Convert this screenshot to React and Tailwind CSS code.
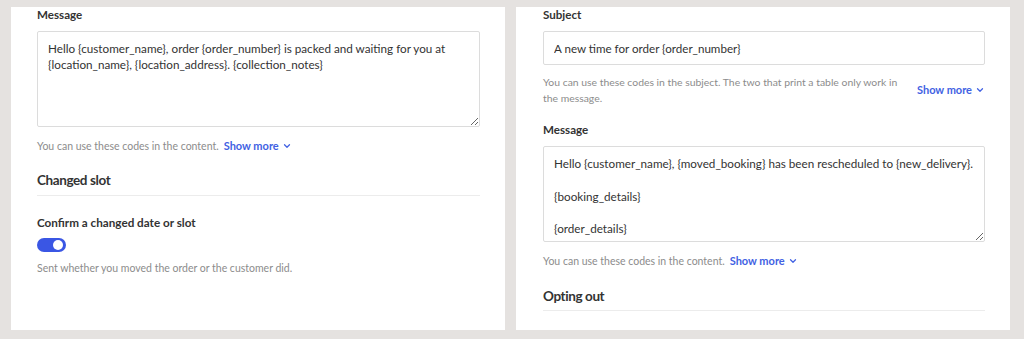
import React from 'react';
import { ChevronDown } from 'lucide-react';

const font = { fontFamily: 'Lato, "Noto Sans", Arial, sans-serif' };

const ShowMore = () => (
  <button type="button" className="inline-flex shrink-0 items-center gap-[3px] whitespace-nowrap text-[11px] font-bold text-[#4262e3]">
    Show more
    <ChevronDown size={10} strokeWidth={3} />
  </button>
);

const MessageBox = ({ value }) => (
  <textarea
    defaultValue={value}
    className="mt-2 block h-[96px] w-full resize-y rounded-[2px] border border-[#dcdcdc] px-[10px] py-[8px] text-[11.7px] leading-[16.3px] text-[#333] outline-none"
  />
);

const App = () => {
  return (
    <div style={font} className="flex h-[339px] gap-[11px] bg-[#e5e2e0] pl-[11px] pt-[7px]">
      {/* Left panel */}
      <div className="h-[323px] w-[494px] bg-white pl-[26px] pr-[25px]">
        <label className="block text-[11.6px] font-bold leading-[16px] text-[#333]">Message</label>
        <MessageBox value={'Hello {customer_name}, order {order_number} is packed and waiting for you at {location_name}, {location_address}. {collection_notes}'} />
        <p className="mt-[11px] flex items-center gap-[5px] text-[10.5px] leading-[16px] text-[#8c8c8c]">
          You can use these codes in the content.
          <ShowMore />
        </p>

        <h3 className="mt-[16px] border-b border-[#ececec] pb-[5px] text-[13.5px] font-bold leading-[20px] tracking-[-0.4px] text-[#333]">Changed slot</h3>

        <div className="mt-[18px] text-[11.7px] font-bold leading-[16px] text-[#333]">Confirm a changed date or slot</div>
        <div className="mt-[8px] flex h-[14px] w-[29px] items-center justify-end rounded-full bg-[#3a56e4] pr-[3px]">
          <span className="h-[10px] w-[10px] rounded-full bg-white" />
        </div>
        <p className="mt-[8px] text-[10.5px] leading-[16px] text-[#8c8c8c]">Sent whether you moved the order or the customer did.</p>
      </div>

      {/* Right panel */}
      <div className="h-[323px] w-[494px] bg-white pl-[27px] pr-[25px]">
        <label className="block text-[11.6px] font-bold leading-[16px] text-[#333]">Subject</label>
        <input
          defaultValue="A new time for order {order_number}"
          className="mt-2 block h-[34px] w-full rounded-[2px] border border-[#dcdcdc] px-[10px] text-[11.6px] text-[#333] outline-none"
        />
        <div className="mt-[9px] flex h-[32px] items-center justify-between gap-4">
          <p className="w-[362px] text-[10.4px] leading-[16px] text-[#8c8c8c]">
            You can use these codes in the subject. The two that print a table only work in the message.
          </p>
          <ShowMore />
        </div>

        <label className="mt-[16px] block text-[11.6px] font-bold leading-[16px] text-[#333]">Message</label>
        <MessageBox value={'Hello {customer_name}, {moved_booking} has been rescheduled to {new_delivery}.\n\n{booking_details}\n\n{order_details}'} />
        <p className="mt-[11px] flex items-center gap-[5px] text-[10.5px] leading-[16px] text-[#8c8c8c]">
          You can use these codes in the content.
          <ShowMore />
        </p>

        <h3 className="mt-[17px] border-b border-[#ececec] pb-[4px] text-[13.5px] font-bold leading-[20px] tracking-[-0.4px] text-[#333]">Opting out</h3>
      </div>
    </div>
  );
};

export default App;
